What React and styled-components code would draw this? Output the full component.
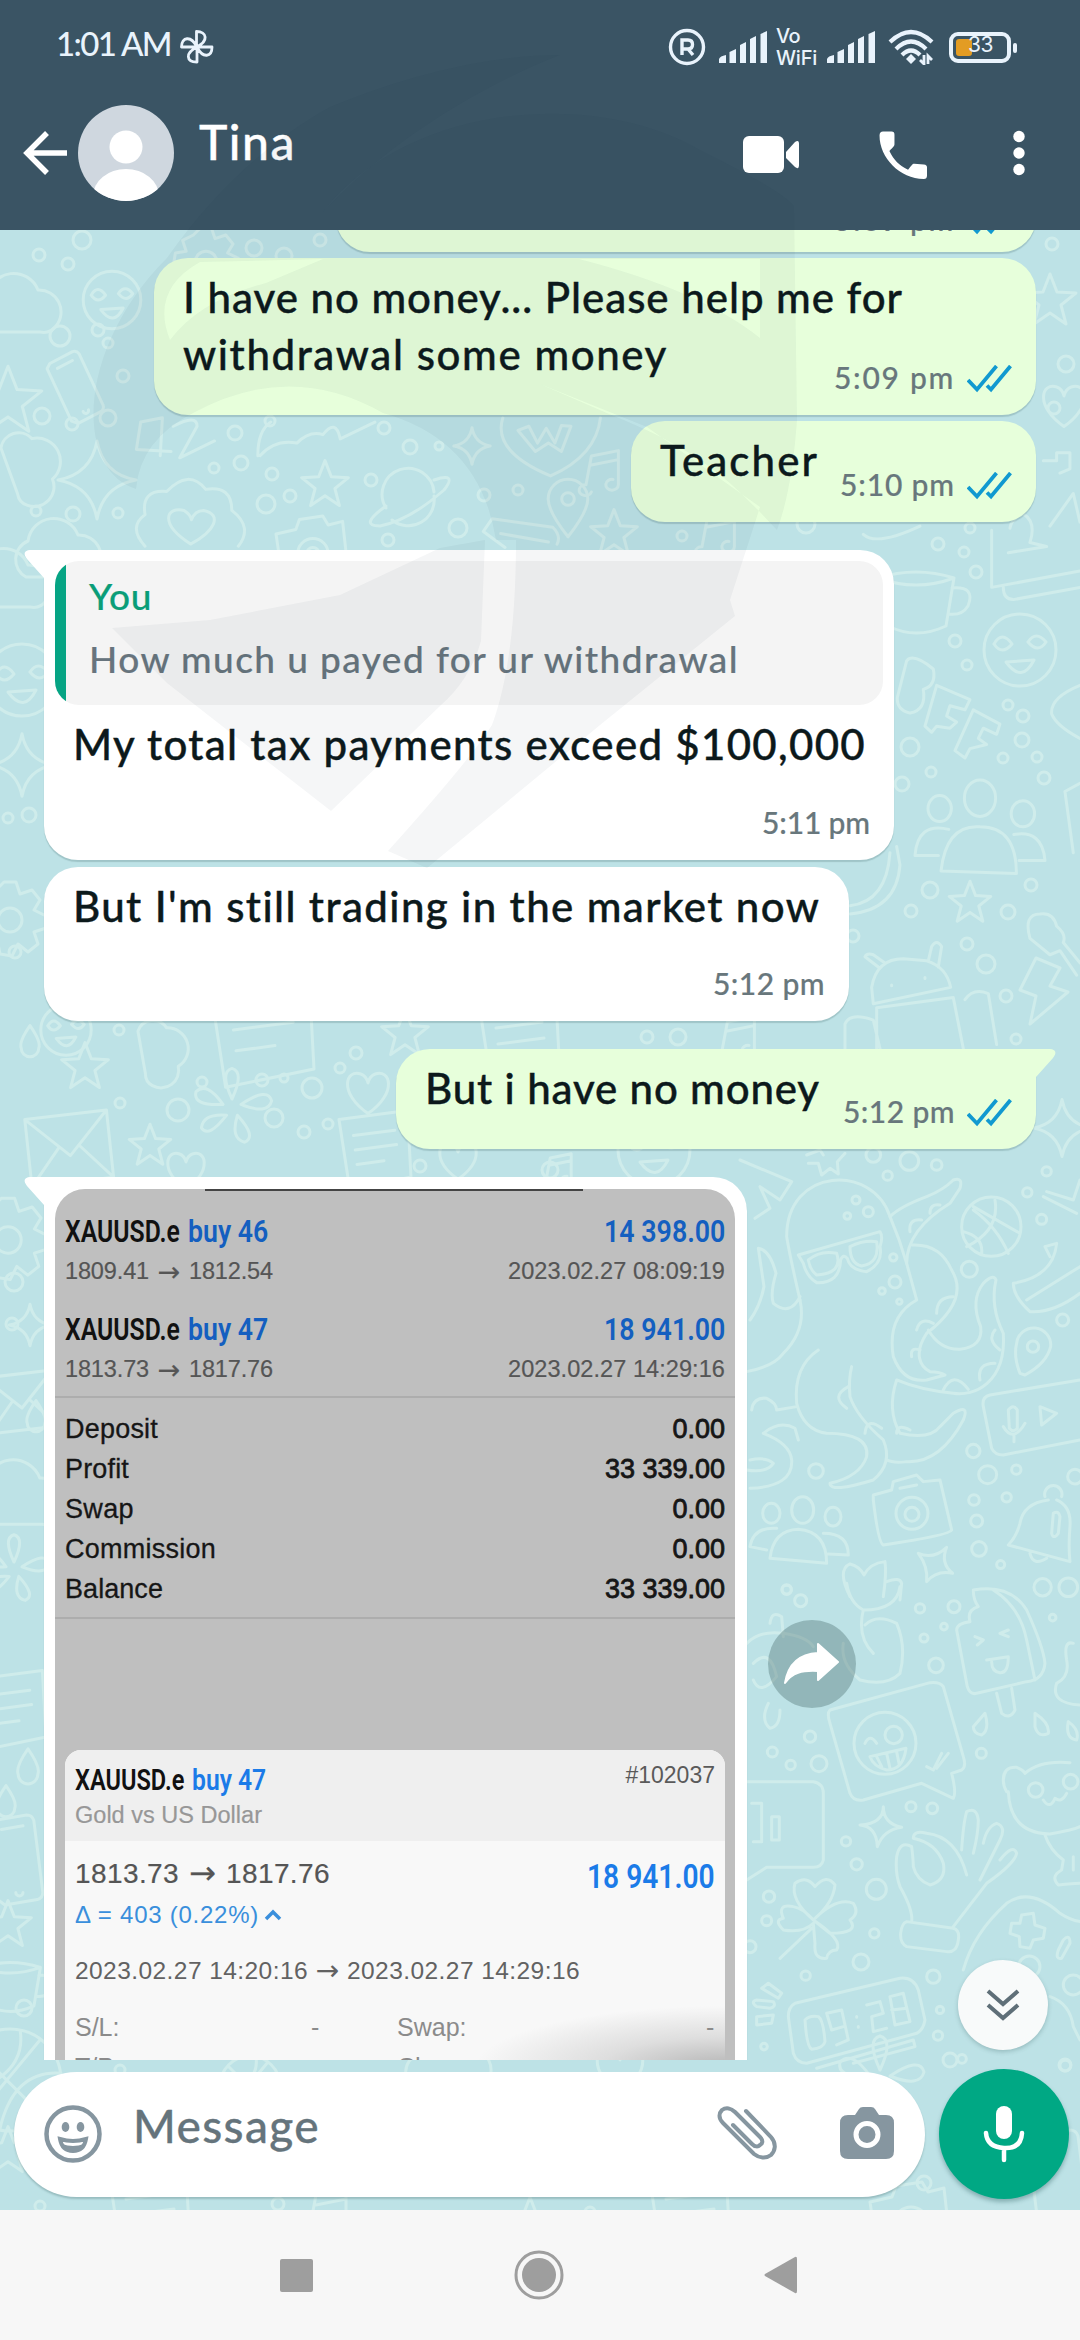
import { useLayoutEffect, useRef, useState } from "react";
import styled, { createGlobalStyle } from "styled-components";

const GlobalStyle = createGlobalStyle`
    * {
        box-sizing: border-box;
    }

    body {
        margin: 0;
        background: #f7f7f7;
    }
`;

const casual = `"Lato", "Open Sans", sans-serif`;
const plain = `"Liberation Sans", Arial, sans-serif`;
const condensed = `"Roboto", "Liberation Sans", sans-serif`;

const Phone = styled.div`
    position: relative;
    width: 1080px;
    height: 2340px;
    display: flex;
    flex-direction: column;
    overflow: hidden;
    font-family: ${casual};
    font-weight: 500;
`;

/* ---------- text fitted to a column ---------- */

const FitSpan = styled.span`
    display: block;
    width: max-content;
    white-space: pre;
    transform-origin: 0 50%;
`;

const Fit = ({ width, children }) => {
    const ref = useRef(null);
    const [spacing, setSpacing] = useState(0);

    useLayoutEffect(() => {
        const natural = ref.current.getBoundingClientRect().width;
        setSpacing((width - natural) / children.length);
    }, [width, children]);

    return (
        <FitSpan ref={ref} style={{ letterSpacing: `${spacing}px` }}>
            {children}
        </FitSpan>
    );
};

// narrows the glyphs themselves instead of the gaps
const Condense = ({ width, children }) => {
    const ref = useRef(null);
    const [scale, setScale] = useState(1);

    useLayoutEffect(() => {
        setScale(width / ref.current.offsetWidth);
    }, [width, children]);

    return (
        <div style={{ width }}>
            <FitSpan ref={ref} style={{ transform: `scaleX(${scale})` }}>
                {children}
            </FitSpan>
        </div>
    );
};

/* ---------- header ---------- */

const Header = styled.header`
    height: 230px;
    flex: none;
    background: #3a5464;
    color: #fff;
`;

const StatusBar = styled.div`
    height: 94px;
    padding: 0 69px 0 56px;
    display: flex;
    align-items: center;
    color: #e9f3fc;
    font-size: 33px;
    line-height: 40px;

    svg {
        flex: none;
    }
`;

const Clock = styled.div`
    margin: -9px 9px 0 0;
`;

const StatusIcons = styled.div`
    display: flex;
    align-items: center;
    margin-left: auto;
`;

const VoWifi = styled.div`
    width: 42px;
    margin: 0 9px;
    font: 500 20px/22px "Inter", sans-serif;
    letter-spacing: -0.5px;
`;

const Battery = styled.div`
    width: 62px;
    height: 31px;
    margin-left: 15px;
    border: 4px solid #e9f3fc;
    border-radius: 9px;
    display: flex;
    align-items: center;
    position: relative;
    padding-left: 3px;

    &::after {
        content: "";
        position: absolute;
        right: -10px;
        top: 7px;
        width: 4px;
        height: 10px;
        border-radius: 2px;
        background: #e9f3fc;
    }
`;

const Charge = styled.div`
    width: 16px;
    height: 17px;
    border-radius: 3px;
    background: #e39c23;
`;

const Percent = styled.div`
    margin: -4px 0 0 -4px;
    font: 400 21px/20px "Inter", sans-serif;
    letter-spacing: -0.5px;
`;

const TitleBar = styled.div`
    height: 136px;
    padding-left: 22px;
    display: flex;
    align-items: flex-start;

    svg {
        display: block;
        flex: none;
    }
`;

const Avatar = styled.div`
    margin: 11px 25px 0 10px;
`;

const ContactName = styled.div`
    font-size: 48px;
    line-height: 60px;
    margin-top: 18px;
    flex: 1;
    -webkit-text-stroke: 0.4px currentColor;
`;

const Action = styled.div`
    margin: ${(p) => p.$top}px ${(p) => p.$right}px 0 0;
`;

/* ---------- chat ---------- */

const Body = styled.main`
    position: relative;
    height: 1980px;
    flex: none;
    background: #bde2e6;
`;

const Wallpaper = styled.svg`
    position: absolute;
    inset: 0;
    fill: none;
    stroke: #cfeceb;
    stroke-width: 3;
    stroke-linecap: round;
    stroke-linejoin: round;

    * {
        vector-effect: non-scaling-stroke;
    }
`;

const Messages = styled.div`
    position: relative;
    height: 1830px;
    overflow: hidden;
    padding: 0 44px;
    display: flex;
    flex-direction: column;
    align-items: flex-start;
`;

const Bubble = styled.div`
    position: relative;
    isolation: isolate;
    flex: none;
    display: grid;
    width: ${(p) => p.$w}px;
    height: ${(p) => p.$h}px;
    margin-top: ${(p) => p.$gap ?? 6}px;
    align-self: ${(p) => (p.$mine ? "flex-end" : "flex-start")};
    background: ${(p) => (p.$mine ? "#e7ffdb" : "#fff")};
    border-radius: 34px;
    border-top-left-radius: ${(p) => (p.$tail && !p.$mine ? 0 : 34)}px;
    border-top-right-radius: ${(p) => (p.$tail && p.$mine ? 0 : 34)}px;
    box-shadow: 0 2px 1px rgba(40, 80, 80, 0.2);

    &::before {
        content: ${(p) => (p.$tail ? '""' : "none")};
        position: absolute;
        z-index: -1;
        top: 0;
        ${(p) => (p.$mine ? "right: -20px; transform: scaleX(-1);" : "left: -20px;")}
        width: 40px;
        height: 32px;
        background: inherit;
        clip-path: path("M6 0H40V32H20V28L3 9Q-3 1 6 0Z");
    }
`;

const Copy = styled.div`
    grid-area: 1 / 1;
    padding: ${(p) => p.$top ?? 11}px 0 0 ${(p) => p.$left ?? 29}px;
    font-size: 42px;
    line-height: 57px;
    color: #0c191b;
    -webkit-text-stroke: 0.4px currentColor;
`;

const Meta = styled.div`
    grid-area: 1 / 1;
    align-self: end;
    justify-self: end;
    display: flex;
    align-items: center;
    gap: 12px;
    margin: 0 24px 18px 0;
    font-size: 30px;
    line-height: 40px;
    color: #68777c;
    -webkit-text-stroke: 0.2px currentColor;

    svg {
        margin-top: 3px;
    }
`;

const LastBubble = styled(Bubble)`
    margin-top: -78px;

    ${Meta} {
        margin-bottom: 13px;
    }
`;

const Quote = styled.div`
    grid-area: 1 / 1;
    width: 828px;
    height: 144px;
    margin: 11px;
    border-radius: 24px;
    overflow: hidden;
    display: flex;
    background: #f4f4f4;
    font-size: 37px;
    line-height: 56px;
    color: #67747d;
    -webkit-text-stroke: 0.2px currentColor;
`;

const QuoteBar = styled.div`
    width: 11px;
    margin-right: 23px;
    background: #06a484;
`;

const QuoteBody = styled.div`
    padding-top: 7px;
    display: flex;
    flex-direction: column;
    gap: 7px;
`;

const QuoteAuthor = styled.div`
    color: #0a9d78;
`;

const PhotoRow = styled.div`
    display: flex;
    align-items: flex-start;
    margin-top: 28px;
    flex: none;
`;

const Forward = styled.div`
    width: 88px;
    height: 88px;
    margin: 443px 0 0 21px;
    border-radius: 50%;
    background: rgba(70, 105, 105, 0.36);
    display: flex;
    align-items: center;
    justify-content: center;
`;

/* ---------- trading screenshot ---------- */

const Photo = styled.div`
    grid-area: 1 / 1;
    position: relative;
    width: 680px;
    height: 900px;
    margin: 12px 0 0 11px;
    padding: 25px 10px 0;
    border-radius: 30px 30px 0 0;
    overflow: hidden;
    background: #bfbfbf;
    font-family: ${plain};
    font-weight: 400;
    color: #161616;
`;

const SheetEdge = styled.div`
    position: absolute;
    top: 0;
    left: 150px;
    width: 378px;
    height: 2px;
    background: #444;
`;

const Row = styled.div`
    display: flex;
    justify-content: space-between;
    align-items: center;
    height: ${(p) => p.$h}px;
`;

const Deal = styled.div`
    height: 98px;
`;

const Symbol = styled.div`
    display: flex;
    gap: 8px;
    font: 600 ${(p) => p.$size ?? 31}px / 36px ${condensed};
    color: #111;
`;

const Blue = styled.div`
    font: 600 ${(p) => p.$size ?? 31}px / 36px ${condensed};
    color: ${(p) => (p.$bright ? "#1b7be8" : "#145fc0")};
`;

const Profit = styled(Blue)`
    padding-top: 5px;
`;

const Prices = styled.div`
    font-size: ${(p) => p.$size ?? 23.5}px;
    color: ${(p) => p.$color ?? "#555"};
    -webkit-text-stroke: 0.2px currentColor;
`;

const ChangeLine = styled.div`
    display: flex;
    align-items: center;
    justify-content: space-between;
    width: ${(p) => p.$w}px;
`;

const Arrow = styled.span`
    font-family: "DejaVu Sans", sans-serif;
    font-size: 1.15em;
    line-height: 0.8;
    margin: 0 -2px;
`;

const Rule = styled.div`
    height: 2px;
    margin: ${(p) => p.$top}px -10px 0;
    background: #adadad;
`;

const Totals = styled.div`
    padding-top: 11px;
    font-size: 27px;
    -webkit-text-stroke: 0.3px currentColor;
`;

const Amount = styled.div`
    -webkit-text-stroke: 0.8px currentColor;
`;

const Card = styled.div`
    margin: 131px 0 0;
    height: 370px;
    border-radius: 16px 16px 0 0;
    overflow: hidden;
    background: radial-gradient(ellipse 250px 62px at 100% 318px, #b4b4b4 0, #dedede 50%, #f8f8f8 100%);
`;

const CardHead = styled.div`
    height: 91px;
    padding: 16px 10px 0;
    background: #efefef;
`;

const Ticket = styled.div`
    margin-top: -9px;
    font-size: 23px;
    color: #5a5a5a;
`;

const CardBody = styled.div`
    padding: 15px 10px 0;
    color: #5c5c5c;
`;

const Delta = styled.div`
    display: flex;
    align-items: center;
    gap: 5px;
    height: 46px;
    font-size: 24px;
    color: #3a8fdc;
`;

const Period = styled.div`
    margin-top: 18px;
    font-size: 24.5px;
    line-height: 30px;
    color: #626262;
`;

const Details = styled.div`
    display: grid;
    grid-template-columns: 236px 86px 309px 1fr;
    row-gap: 10px;
    margin-top: 26px;
    font-size: 25px;
    line-height: 30px;
    color: #8b8b8b;
`;

/* ---------- composer and navigation ---------- */

const Composer = styled.div`
    position: relative;
    display: flex;
    align-items: center;
    gap: 14px;
    padding: 9px 11px 0 14px;
`;

const Field = styled.div`
    width: 911px;
    height: 125px;
    border-radius: 63px;
    background: #fff;
    box-shadow: 0 2px 2px rgba(40, 80, 80, 0.25);
    display: flex;
    align-items: center;
    padding: 0 31px 0 30px;

    svg {
        flex: none;
    }
`;

const Placeholder = styled.div`
    flex: 1;
    margin: -17px 0 0 31px;
    font-size: 46px;
    line-height: 60px;
    color: #65747c;
    -webkit-text-stroke: 0.3px currentColor;
`;

const FieldIcons = styled.div`
    display: flex;
    align-items: center;
    gap: 63px;
    margin-top: -3px;
`;

const Mic = styled.div`
    width: 130px;
    height: 130px;
    border-radius: 50%;
    background: #00a884;
    box-shadow: 0 3px 4px rgba(30, 80, 80, 0.35);
    display: flex;
    align-items: center;
    justify-content: center;
`;

const ScrollDown = styled.div`
    position: absolute;
    left: 958px;
    top: 1730px;
    width: 90px;
    height: 90px;
    border-radius: 50%;
    background: #f8fafa;
    box-shadow: 0 2px 4px rgba(40, 80, 80, 0.25);
    display: flex;
    align-items: center;
    justify-content: center;
`;

const NavBar = styled.nav`
    height: 130px;
    background: #f7f7f7;
    display: flex;
    align-items: center;
    padding: 0 283px 0 280px;
    justify-content: space-between;
`;

const Watermark = styled.svg`
    position: absolute;
    left: 0;
    top: 0;
    pointer-events: none;
    fill: rgba(30, 50, 60, 0.042);
`;

/* ---------- wallpaper ---------- */

const motifs = {
    star: "M0-26L7-8 26-7 11 5 16 24 0 13-16 24-11 5-26-7-7-8Z",
    spark: "M0-26Q4-4 26 0Q4 4 0 26Q-4 4-26 0Q-4-4 0-26Z",
    heart: "M0 24C-34 0-24-26-8-20Q-2-18 0-10Q2-18 8-20C24-26 34 0 0 24Z",
    pin: "M0 32Q-22 4-22-10A22 22 0 1 1 22-10Q22 4 0 32ZM-7-10a7 7 0 1 0 14 0a7 7 0 1 0-14 0",
    drop: "M0-18Q14 2 11 10A11 11 0 0 1-11 10Q-14 2 0-18Z",
    cloud: "M-34 22A20 20 0 0 1-32-14A26 26 0 0 1 18-20A22 22 0 0 1 36 16Q30 24 20 22Z",
    note: "M-14 20a7 6 0 1 1-6-8L-14-20 16-26V12M16 12a7 6 0 1 1-6-6M-14-10L16-16",
    planet: "M-24 8A26 26 0 1 1 24-8M24-4A26 26 0 0 1-18 20M-24 6Q-52 26-30 26Q0 20 34-10Q48-28 24-20",
    camera: "M-40-20L-18-25-14-36 12-40 18-30 34-34 40 20-32 34ZM-16 2a17 17 0 1 0 34 0a17 17 0 1 0-34 0M-6 2a7 7 0 1 0 14 0a7 7 0 1 0-14 0",
    face: "M-36 0a36 36 0 1 0 72 0a36 36 0 1 0-72 0M-14 12Q2 34 14 10ZM-26-6Q-18-20-8-6-18 6-26-6M8-8Q16-20 26-8 18 4 8-8",
    people: "M-12-26a12 14 0 1 0 24 0a12 14 0 1 0-24 0M-30 30Q-26-6 0-4Q28-4 28 32ZM-40-18a9 10 0 1 0 18 0a9 10 0 1 0-18 0M24-14a9 10 0 1 0 18 0a9 10 0 1 0-18 0M-32 18H-50Q-48-8-24-2M30 22H50Q48-2 26 2",
    letter: "M-36-22L32-30 38 26-30 34ZM-36-22L2 8 32-30M-30 34L-8 2M38 26L10 0",
    page: "M-40-34L36-44 40 30-28 44ZM-24-16L22-22M-22 0L24-6M-20 16L10 12",
    gear: "M-6-38H6L10-26 22-30 30-20 24-10 36-4V8L24 12 28 24 18 32 8 24 2 36-10 34-12 24-26 28-32 16-24 8-36 2-34-10-22-12-26-24-14-30ZM-12 0a12 12 0 1 0 24 0a12 12 0 1 0-24 0",
    bolt: "M-8-32L16-22 6-4 24 2-14 34-8 6-24 0Z",
    mug: "M-38-22Q0-34 38-22L30 26Q0 40-28 26ZM36-12Q60-14 52 6 46 16 32 14M-38-22Q0-8 38-22",
    flower: "M0-10Q-14-40 0-44 14-40 0-10ZM10-4Q40-24 44-8 40 8 10-4ZM6 8Q28 32 14 38-2 34 6 8ZM-6 8Q-26 34-34 22-32 6-6 8ZM-10-4Q-44-2-40-18-28-30-10-4Z",
    ball: "M-30 0a30 30 0 1 0 60 0a30 30 0 1 0-60 0M-22-20L20 22M-28 8Q10-2 6-29M-6 29Q2-6 30-4M18-24L-20 22",
    phone: "M-22-44L14-50Q20-50 22-44L32 36Q32 42 26 44L-10 50-18 44-28-38ZM-14-34L10-38M2 36a4 4 0 1 0 8 0",
};

const placed = [
    ["cloud", 20, 310, 1], ["gear", 206, 262, 0.9], ["face", 112, 300, 0.8], ["phone", 74, 388, 0.7, -18], ["star", 8, 400, 1.3],
    ["spark", 97, 480, 1.5], ["cloud", 30, 470, 0.9, 70], ["star", 325, 484, 0.9], ["planet", 410, 500, 1], ["spark", 472, 446, 0.7],
    ["pin", 568, 508, 0.9], ["note", 604, 474, 0.9], ["star", 614, 533, 0.9], ["camera", 312, 552, 0.9], ["cloud", 60, 555, 1],
    ["note", 720, 536, 0.9], ["star", 1050, 300, 1], ["heart", 1064, 405, 0.9], ["mug", 916, 600, 1],
    ["face", 1020, 650, 1], ["people", 980, 832, 1.3], ["star", 970, 902, 0.8], ["bolt", 1044, 990, 1], ["spark", 22, 765, 1.2],
    ["face", 22, 680, 1], ["cloud", 10, 585, 1], ["gear", 10, 920, 1], ["face", 66, 1030, 0.7], ["star", 85, 1066, 0.9],
    ["cloud", 160, 1055, 0.8, 80], ["page", 262, 1030, 1.3], ["star", 405, 1033, 0.9], ["page", 520, 1044, 1], ["note", 740, 1040, 0.9],
    ["heart", 368, 1092, 0.9], ["letter", 68, 1146, 1.2], ["flower", 232, 1108, 0.9], ["star", 150, 1145, 0.8], ["page", 375, 1150, 0.9],
    ["spark", 1062, 1128, 1.1], ["heart", 186, 1170, 0.8], ["gear", 8, 1240, 1.1], ["letter", 20, 1400, 1], ["drop", 36, 1415, 0.8],
    ["cloud", 20, 1500, 1.1], ["flower", 14, 1570, 0.8], ["page", 10, 1710, 0.9], ["drop", 28, 1765, 0.9], ["drop", 6, 1800, 0.8],
    ["phone", 14, 1860, 0.9], ["star", 8, 1924, 0.9], ["ball", 10, 2080, 1.7], ["mug", 10, 1985, 0.8], ["spark", 30, 1325, 0.8],
    ["page", 150, 2215, 1], ["note", 330, 2215, 1], ["star", 530, 2218, 0.8], ["page", 690, 2215, 1], ["camera", 910, 2222, 1],
    ["cloud", 450, 2068, 1], ["heart", 620, 2070, 1], ["ball", 250, 2086, 1], ["flower", 880, 2080, 1], ["phone", 1056, 2180, 1],
    ["note", 560, 1172, 0.7], ["heart", 458, 1160, 0.8], ["face", 654, 1150, 1], ["star", 8, 2150, 0.9], ["drop", 30, 1040, 0.8],
];

const dots = [
    [39, 255, 6], [68, 264, 6], [82, 240, 9], [254, 248, 8], [284, 256, 8], [320, 240, 6], [98, 330, 6], [60, 336, 10], [108, 343, 5],
    [123, 376, 6], [108, 418, 8], [42, 416, 8], [72, 424, 6], [235, 433, 7], [384, 428, 6], [410, 447, 7], [439, 446, 4], [270, 421, 5],
    [241, 463, 7], [272, 474, 6], [214, 468, 5], [290, 496, 6], [266, 504, 9], [371, 480, 6], [484, 495, 6], [518, 490, 5], [458, 528, 9],
    [388, 540, 6], [118, 513, 5], [36, 511, 5], [73, 514, 7], [682, 536, 5], [806, 524, 9], [938, 544, 6], [964, 552, 5], [976, 572, 6],
    [970, 528, 5], [1052, 244, 6], [1066, 364, 8], [1054, 408, 6], [955, 641, 6], [967, 665, 5], [1008, 705, 5], [1023, 716, 6],
    [1022, 740, 7], [1003, 758, 5], [1037, 757, 5], [1044, 778, 6], [910, 747, 9], [902, 784, 7], [931, 772, 5], [930, 890, 8],
    [911, 911, 6], [1008, 912, 7], [1031, 885, 6], [853, 936, 6], [967, 944, 6], [986, 964, 9], [1006, 996, 6], [1016, 1039, 5],
    [647, 1037, 6], [678, 1037, 8], [29, 815, 7], [8, 818, 5], [15, 952, 6], [119, 1030, 5], [120, 1103, 5], [178, 1110, 11],
    [262, 1080, 6], [284, 1078, 4], [312, 1088, 10], [202, 1082, 5], [274, 1118, 9], [304, 1132, 6], [328, 1124, 5], [356, 1053, 6],
    [340, 1068, 5], [420, 1166, 6], [550, 1170, 8], [14, 1282, 9], [12, 1324, 6], [24, 2008, 8], [120, 2070, 5], [590, 2212, 5],
    [278, 2204, 6], [924, 2183, 7], [1065, 2065, 6], [40, 2206, 5], [950, 2060, 7],
];

// octopus, basketball, voice note, bell
const octopusArt = [
    "M180 600Q150 470 140 410C140 200 400 190 450 350Q480 420 500 490L530 600Q440 650 460 770Q490 850 560 840L615 825Q600 815 570 815C540 800 520 760 560 700Q690 600 635 510 600 430 515 435",
    "M450 350Q480 320 560 290Q610 270 640 240Q670 230 660 265L630 310Q500 390 500 490",
    "M565 690Q600 750 660 748Q730 740 722 680Q690 600 730 550 760 520 768 540 750 620 790 700C800 850 700 890 640 880Q540 870 470 840Q440 930 480 1000Q570 1020 600 980L640 940Q690 910 670 960 600 1090 500 1085 460 1090 440 1080",
    "M235 750Q160 800 170 910 190 990 260 1000 390 1000 380 1070 360 1130 270 1150 270 1180 400 1140 460 1090 430 1020 350 950 330 890 325 840 335 800",
    "M180 600Q200 690 130 760 100 800 20 815M180 590Q150 650 100 610 90 580 108 520 90 450 55 445 60 480 72 560 60 620 30 660",
    "M175 465L420 395Q430 410 420 440 430 490 380 515 330 510 322 475 310 460 302 480 300 550 230 548 200 530 190 490ZM205 480Q240 450 290 460 310 520 230 525 210 510 205 480M330 440Q370 420 410 425 420 490 365 498 330 490 330 440",
    "M200 165L240 150 250 165M205 190L235 190 245 225 270 205 295 222 292 185 315 160",
    "M665 380a89 89 0 1 0 178 0a89 89 0 1 0-178 0M700 320L840 400M680 440Q780 390 765 300M700 330Q770 380 805 460M670 395Q730 410 725 460",
    "M915 440L950 430Q940 530 820 550 820 590 870 635 940 640 1020 580M915 440L930 470M860 600L1020 500",
    "M840 820Q820 770 830 730A50 50 0 0 1 932 740Q920 790 855 825ZM862 740a17 17 0 1 0 34 0a17 17 0 1 0-34 0",
    "M1020 840L750 885Q725 890 730 920L755 1045Q765 1065 790 1065L1020 1020M805 930Q820 910 832 930V985Q820 1000 808 985ZM790 980Q820 1030 855 970M822 1005V1025M900 920L950 940 905 975Z",
    "M400 1185L455 1170 460 1145 530 1125 550 1145 600 1140 635 1290Q630 1305 430 1335 415 1330 400 1200ZM468 1240a48 48 0 1 0 96 0a48 48 0 1 0-96 0M495 1243a21 21 0 1 0 42 0a21 21 0 1 0-42 0M480 1165L530 1155",
    "M925 1200Q850 1210 840 1270 830 1310 805 1335L990 1385Q985 1340 990 1280 995 1220 950 1200M915 1190a26 26 0 1 1 50 0M870 1360Q880 1400 920 1375M940 1240Q955 1230 960 1250L955 1300Q940 1320 935 1300Z",
    "M30 1340Q40 1280 110 1285M30 1340L80 1350M90 1375Q100 1290 175 1288 260 1295 260 1390ZM155 1230a33 40 0 1 0 66 0a33 40 0 1 0-66 0M68 1240a26 30 0 1 0 52 0a26 30 0 1 0-52 0M255 1250a24 28 0 1 0 48 0a24 28 0 1 0-48 0M250 1300Q325 1300 325 1365L265 1362",
    "M535 1360Q580 1380 620 1342 600 1390 638 1420 590 1410 560 1445 565 1400 535 1360ZM330 1490Q290 1410 330 1392 360 1400 372 1425 390 1390 435 1385 440 1420 430 1490M440 1445Q480 1430 485 1450L480 1500",
    "M0 180L155 245 120 300 60 260 90 325 45 355M920 275L1000 300 1020 240M910 290L1010 340",
    "M35 930Q40 890 80 895 110 910 110 930L170 920M70 1000Q120 960 165 985L175 1020M20 1110Q80 1120 100 1090 80 1070 30 1080M30 1165Q160 1160 155 1080 150 1030 70 1000",
    "M510 395Q505 355 545 360M570 340Q570 310 600 315M590 640Q590 590 640 590M530 690Q540 650 580 670M515 770Q510 740 540 750M720 840Q710 790 765 790M610 870Q640 810 685 868M780 750Q740 720 765 690M320 925Q270 890 325 860M375 1000Q380 950 425 985M470 1000Q470 970 510 990",
];

const octopusDots = [
    [400, 165, 22], [508, 183, 28], [590, 195, 16], [443, 227, 14], [385, 335, 15], [348, 300, 12], [322, 348, 10], [460, 472, 11],
    [465, 546, 18], [426, 573, 10], [478, 605, 8], [688, 508, 24], [862, 277, 14], [905, 358, 15], [920, 214, 14], [968, 660, 18],
    [700, 1053, 20], [743, 1124, 27], [829, 1109, 14], [702, 1200, 16], [800, 1192, 14], [710, 1263, 18], [717, 1347, 22],
    [782, 1394, 12], [908, 1462, 26], [985, 1462, 28], [1005, 1130, 22], [228, 1113, 22], [140, 1470, 14],
];

// popsicle, winking bubble, clover, hand, gamepad and clock
const stickerArt = [
    "M700 30Q810 10 860 90 910 200 915 250 910 300 860 305L710 340Q690 345 682 320L650 150Q650 130 690 125 680 90 715 80 700 60 700 30ZM760 30Q840 80 860 180L885 300M770 340L785 400Q810 420 825 390L815 325M740 240L805 230Q805 280 780 278 755 275 755 245M705 170L730 180 712 195M805 150L780 160 805 170",
    "M270 390Q260 400 270 430L330 640Q340 665 370 660L545 610 640 655Q650 640 635 580L665 570Q680 560 670 530L610 320Q600 305 570 308ZM342 490a93 93 0 1 0 186 0a93 93 0 1 0-186 0M375 490Q390 460 410 490M435 465a26 26 0 1 0 52 0a26 26 0 1 0-52 0M390 530L498 505Q490 570 440 570 400 560 390 530M410 530L425 560M440 520L450 565M470 515L478 555M560 560L580 570 605 520M590 565L625 520",
    "M20 605H220Q250 610 250 640V840Q245 862 220 862H80L20 900M35 670H65V785H40M95 710V780H118V710Z",
    "M220 1020Q150 960 165 910 200 885 225 920 260 880 285 915 280 970 220 1020 290 950 340 970 360 1000 330 1020 360 1060 270 1060L220 1020Q310 1080 290 1110 265 1110 260 1135 220 1140 225 1090L220 1030Q190 1060 130 1050 100 1020 130 1015 110 970 160 980 190 985 220 1020M215 1045L120 1135",
    "M515 1025Q520 990 480 920 465 880 470 830 480 780 515 800 520 840 520 860 530 900 570 915 620 900 610 850 590 790 520 775 520 750 560 760 650 770 680 885M665 810Q670 730 680 695 710 680 715 720 715 760 700 820M730 790Q740 740 770 730 800 740 780 780L720 900M780 840Q820 790 830 820 825 850 740 910L640 1040M500 1025L640 1045Q660 1050 655 1080 650 1120 620 1115L500 1100Q480 1090 482 1060 485 1030 500 1025Z",
    "M800 570Q780 600 800 635M790 600Q790 560 830 562 850 570 855 580 900 540 990 548M805 635Q810 760 930 762 1000 750 1020 740M865 630a22 22 0 1 0 44 0a22 22 0 1 0-44 0M970 605a22 22 0 1 0 44 0a22 22 0 1 0-44 0M910 660Q930 690 945 655 965 670 980 640M915 765Q930 810 970 840L965 870Q930 890 955 915 1000 910 1020 910M1000 830V870",
    "M670 1170Q700 1060 800 970 870 920 960 1000 990 1020 1020 1025M845 1005L880 1000 885 1035 915 1045 910 1075 880 1080 870 1105 840 1100 838 1070 810 1060 815 1030 840 1030ZM970 1080Q990 1060 990 1090L965 1135Q945 1140 955 1110ZM930 1250Q990 1270 1000 1340L1020 1380",
    "M165 1270L480 1195Q520 1190 535 1230L555 1320Q550 1350 530 1360L200 1450Q170 1450 160 1420L145 1310Q145 1280 165 1270ZM195 1320Q210 1305 235 1310 250 1320 255 1385 250 1405 215 1408 200 1400 195 1320ZM310 1340L275 1350 260 1300 305 1290 325 1380 290 1395M380 1275L420 1265 430 1300 395 1310 400 1355 440 1345M450 1250L490 1240 510 1325 465 1335ZM455 1290L500 1285M350 1310V1312M355 1340V1342M230 1465L520 1380 525 1400 340 1450",
    "M50 1280Q30 1265 50 1260L100 1265Q110 1280 90 1285ZM50 1310L100 1305 95 1330 50 1335ZM65 1225L85 1210 125 1240 115 1255Z",
    "M20 190Q60 150 130 160 200 170 220 200M40 250Q90 200 110 290 60 350 40 300M90 130Q95 90 125 110L130 170M85 370Q60 420 90 445 120 440 120 390M320 10Q330 70 370 90 470 90 480 20M370 90Q350 170 400 220M375 135Q410 100 470 130 500 200 480 280 440 320 360 300 300 250 310 190",
    "M1000 190Q970 180 980 240 990 290 950 310 930 370 1020 375M885 400Q930 430 925 460 895 475 885 440ZM985 425Q1020 450 1010 480 975 475 985 425M735 400Q750 450 725 465 700 460 700 440ZM430 680Q430 730 485 742 430 750 412 800 410 740 360 735 430 730 430 680Z",
];

const stickerDots = [
    [140, 28, 14], [182, 62, 18], [540, 85, 14], [642, 80, 18], [612, 140, 10], [552, 174, 12], [588, 256, 22], [938, 113, 10],
    [210, 470, 17], [97, 516, 15], [152, 555, 14], [237, 551, 24], [724, 520, 15], [513, 680, 15], [577, 685, 16], [318, 784, 14],
    [350, 853, 17], [409, 928, 30], [87, 950, 17], [80, 1022, 15], [403, 1060, 14], [363, 1146, 24], [197, 1187, 14], [580, 1190, 20],
    [600, 1290, 11], [594, 1367, 14], [72, 1400, 10], [666, 1437, 13], [976, 1457, 16], [1000, 1215, 30], [30, 1100, 18], [868, 1160, 32],
];

const shieldArt = [
    "M140 480L190 470 185 560M140 480L130 545 210 550M215 490Q270 460 270 490L230 565 310 525M410 560Q410 500 440 480M415 560Q450 520 500 530 530 500 560 510 590 470 600 520 640 500 680 480",
    "M150 775Q110 730 150 700 140 640 200 645 250 590 290 640 350 630 350 690 400 730 365 775M255 770C180 720 200 680 240 690Q255 700 257 712 265 690 285 690C330 700 310 740 255 770Z",
    "M975 470Q950 550 1085 608 1190 560 1200 470M1010 500L1035 490 1055 530 1075 495 1095 530 1110 488 1132 490 1110 550 1080 530 1050 550Z",
    "M930 740L950 710 1090 730Q1110 750 1100 770M930 740L980 778M970 745L1080 765",
];

const friendsArt = [
    "M920 590Q940 570 1000 610 1010 650 970 660 980 710 930 718 890 710 892 680ZM1010 650L1110 685 1095 710 1050 700 1040 725 1070 740 1050 755 1010 750 995 765 975 750ZM1120 710L1200 745 1190 770 1150 755 1135 780 1160 795 1110 805 1095 828 1065 810Z",
    "M820 1430L815 1390Q830 1320 910 1320L980 1325Q1040 1340 1052 1390ZM835 1340L795 1315Q800 1305 820 1310L855 1330M985 1325L995 1290Q1010 1270 1025 1290L1015 1340M830 1440L1060 1415 1090 1540M830 1440V1540M735 1540V1480Q750 1450 820 1470L840 1540M1095 1420Q1120 1390 1165 1405L1190 1530M875 1384V1386M975 1366V1368",
    "M1225 325L1340 310 1290 300Q1310 250 1270 230 1235 240 1230 265M1350 260L1420 180 1440 250M1175 270V410L1440 370M1210 410Q1210 440 1240 440L1440 410M1330 100L1370 100 1370 80H1410V120L1380 130",
    "M1290 1270Q1270 1210 1320 1210 1360 1205 1370 1240 1400 1260 1390 1280L1440 1330M1290 1270L1350 1310 1380 1300 1430 1360M1395 910L1440 890M1395 910L1420 1060M1440 650Q1350 680 1355 720 1370 750 1440 780M750 1210Q890 1200 900 1090L890 1045M750 1190Q860 1180 870 1060M790 280Q830 310 960 260",
];

const Art = ({ at, lines, circles = [] }) => (
    <g transform={at}>
        {lines.map((d) => (
            <path key={d} d={d} />
        ))}
        {circles.map(([x, y, r]) => (
            <circle key={`${x}-${y}`} cx={x} cy={y} r={r} />
        ))}
    </g>
);

const Doodles = () => (
    <Wallpaper width="1080" height="1980" viewBox="0 230 1080 1980">
        {placed.map(([kind, x, y, scale, turn = 0]) => (
            <path key={`${x}-${y}`} d={motifs[kind]} transform={`translate(${x} ${y}) rotate(${turn}) scale(${scale})`} />
        ))}
        {dots.map(([x, y, r]) => (
            <circle key={`${x}-${y}`} cx={x} cy={y} r={r} />
        ))}
        <Art at="translate(740 1100) scale(.3333)" lines={octopusArt} circles={octopusDots} />
        <Art at="translate(740 1580) scale(.3333)" lines={stickerArt} circles={stickerDots} />
        <Art at="translate(80 220) scale(.4337 .4209)" lines={shieldArt} />
        <Art at="translate(600 420) scale(.3333 .4082)" lines={friendsArt} />
    </Wallpaper>
);

/* ---------- icons ---------- */

const Signal = () => (
    <svg width="48" height="32" viewBox="0 0 48 32" fill="currentColor">
        <path d="M0 32V28Q1 25 7 24V32ZM10.500 32V21L17 18V32ZM21 32V14L27 11V32ZM31 32V8L37 5V32ZM41.500 32V3L48 0V32Z" />
    </svg>
);

const Ticks = () => (
    <svg width="45" height="28" viewBox="0 0 45 28" fill="none" stroke="#1199d0" strokeWidth="3.800">
        <path d="M1 15L10 24.500 29.500 1M20 20.500L24 24.500 43.500 1" />
    </svg>
);

const Time = ({ value, width, read }) => (
    <Meta>
        <Fit width={width}>{value}</Fit>
        {read && <Ticks />}
    </Meta>
);

const Change = ({ from, to, width, total }) => (
    <ChangeLine $w={total}>
        <Fit width={width}>{from}</Fit>
        <Arrow>→</Arrow>
        <Fit width={width}>{to}</Fit>
    </ChangeLine>
);

const deals = [
    { lots: "buy 46", profit: "14 398.00", from: "1809.41", to: "1812.54", date: "2023.02.27 08:09:19" },
    { lots: "buy 47", profit: "18 941.00", from: "1813.73", to: "1817.76", date: "2023.02.27 14:29:16" },
];

const totals = [
    ["Deposit", "0.00", 93],
    ["Profit", "33 339.00", 64],
    ["Swap", "0.00", 69],
    ["Commission", "0.00", 151],
    ["Balance", "33 339.00", 98],
];

const TradePhoto = () => (
    <Photo>
        <SheetEdge />
        {deals.map((deal) => (
            <Deal key={deal.lots}>
                <Row $h={36}>
                    <Symbol>
                        <Condense width={115}>XAUUSD.e</Condense>
                        <Blue>
                            <Condense width={80}>{deal.lots}</Condense>
                        </Blue>
                    </Symbol>
                    <Blue>
                        <Condense width={121}>{deal.profit}</Condense>
                    </Blue>
                </Row>
                <Row $h={43}>
                    <Prices>
                        <Change from={deal.from} to={deal.to} width={84} total={208} />
                    </Prices>
                    <Prices>
                        <Fit width={217}>{deal.date}</Fit>
                    </Prices>
                </Row>
            </Deal>
        ))}
        <Rule $top={-14} />
        <Totals>
            {totals.map(([label, amount, width]) => (
                <Row key={label} $h={40}>
                    <Fit width={width}>{label}</Fit>
                    <Amount>{amount}</Amount>
                </Row>
            ))}
        </Totals>
        <Rule $top={8} />
        <Card>
            <CardHead>
                <Row $h={28}>
                    <Symbol $size={29}>
                        <Condense width={109}>XAUUSD.e</Condense>
                        <Blue $size={29} $bright>
                            <Condense width={74}>buy 47</Condense>
                        </Blue>
                    </Symbol>
                    <Ticket>#102037</Ticket>
                </Row>
                <Row $h={43}>
                    <Prices $color="#979797">
                        <Fit width={187}>Gold vs US Dollar</Fit>
                    </Prices>
                </Row>
            </CardHead>
            <CardBody>
                <Row $h={36}>
                    <Prices $size={28}>
                        <Change from="1813.73" to="1817.76" width={104} total={255} />
                    </Prices>
                    <Profit $bright $size={33}>
                        <Condense width={128}>18 941.00</Condense>
                    </Profit>
                </Row>
                <Delta>
                    <Fit width={184}>Δ = 403 (0.22%)</Fit>
                    <svg width="18" height="12" viewBox="0 0 18 12" fill="none" stroke="currentColor" strokeWidth="3.500">
                        <path d="M2 10L9 3 16 10" />
                    </svg>
                </Delta>
                <Period>
                    <Change from="2023.02.27 14:20:16" to="2023.02.27 14:29:16" width={233} total={505} />
                </Period>
                <Details>
                    <span>S/L:</span>
                    <span>-</span>
                    <span>Swap:</span>
                    <span>-</span>
                    <span>T/P:</span>
                    <span>-</span>
                    <span>Charges:</span>
                    <span>-</span>
                </Details>
            </CardBody>
        </Card>
    </Photo>
);

const TopBar = () => (
    <Header>
        <StatusBar>
            <Clock>
                <Fit width={115}>1:01 AM</Fit>
            </Clock>
            <svg width="34" height="34" viewBox="0 0 34 34" fill="none" stroke="currentColor" strokeWidth="2.800" strokeLinejoin="round">
                <path d="M16.500 17V1.500C27 1.500 29 11 16.500 17M17 17H32C32 27 23 29 17 17M17 17V32C6 32 5 23 17 17M17 17H1.500C1.500 7 11 5 17 17" />
            </svg>
            <StatusIcons>
                <svg width="38" height="38" viewBox="0 0 38 38" fill="none" stroke="currentColor" strokeWidth="3.400">
                    <circle cx="19" cy="19" r="16.500" />
                    <path d="M14 27V12H20Q24.500 12 24.500 16.500T20 21H14M20 21L25 27" />
                </svg>
                <svg width="13" height="2" />
                <Signal />
                <VoWifi>
                    <div>Vo</div>
                    <Fit width={41}>WiFi</Fit>
                </VoWifi>
                <Signal />
                <svg width="13" height="2" />
                <svg width="46" height="36" viewBox="0 0 46 36" fill="none" stroke="currentColor" strokeWidth="4.200">
                    <path d="M2 13Q23-7 44 13M8 20Q23 5 38 20M14 26Q23 17 32 26" />
                    <path d="M23 25l5 5-5 5-5-5Z" fill="currentColor" stroke="none" />
                    <path d="M36 26V35L32 31M40 35V27L44 31" strokeWidth="2.800" />
                </svg>
                <Battery>
                    <Charge />
                    <Percent>33</Percent>
                </Battery>
            </StatusIcons>
        </StatusBar>
        <TitleBar>
            <Action $top={36} $right={0}>
                <svg width="46" height="46" viewBox="0 0 46 46" fill="none" stroke="#fff" strokeWidth="5.500">
                    <path d="M25 3L5 23 25 43M5 23H45" />
                </svg>
            </Action>
            <Avatar>
                <svg width="96" height="96" viewBox="0 0 96 96">
                    <clipPath id="avatar">
                        <circle cx="48" cy="48" r="48" />
                    </clipPath>
                    <g clipPath="url(#avatar)">
                        <rect width="96" height="96" fill="#cfd7df" />
                        <circle cx="48" cy="42" r="16.500" fill="#fff" />
                        <ellipse cx="48" cy="91" rx="33" ry="27" fill="#fff" />
                    </g>
                </svg>
            </Avatar>
            <ContactName>
                <Fit width={97}>Tina</Fit>
            </ContactName>
            <Action $top={42} $right={79}>
                <svg width="57" height="38" viewBox="0 0 57 38" fill="#fff">
                    <rect width="41" height="37" rx="6" />
                    <path d="M43 16L52 6Q56 3 56 8V29Q56 34 52 31L43 22Z" />
                </svg>
            </Action>
            <Action $top={37} $right={85}>
                <svg width="48" height="48" viewBox="3 3 18 18" fill="#fff">
                    <path d="M4.500 3.200H7.700C8.500 3.200 8.800 3.600 8.800 4.400V8C8.800 8.600 8.400 9 6.900 10.500C8.600 14 10.500 15.800 13.900 17.500C15.200 16 15.500 15.300 16.200 15.300L19.800 15.600C20.700 15.700 21 16.100 21 16.700V19.700C21 20.600 20.600 21 19.800 21C10.800 21 3.200 13 3.200 4.700C3.200 3.600 3.700 3.200 4.500 3.200Z" />
                </svg>
            </Action>
            <Action $top={36} $right={54}>
                <svg width="14" height="46" viewBox="0 0 14 46" fill="#fff">
                    <circle cx="7" cy="6.500" r="5.700" />
                    <circle cx="7" cy="23" r="5.700" />
                    <circle cx="7" cy="39.500" r="5.700" />
                </svg>
            </Action>
        </TitleBar>
    </Header>
);

const Chat = () => (
    <Messages>
        <LastBubble $mine $w={700} $h={100}>
            <Time value="5:09 pm" width={121} read />
        </LastBubble>
        <Bubble $mine $w={882} $h={157}>
            <Copy>
                <Fit width={720}>I have no money... Please help me for</Fit>
                <Fit width={485}>withdrawal some money</Fit>
            </Copy>
            <Time value="5:09 pm" width={121} read />
        </Bubble>
        <Bubble $mine $w={405} $h={101}>
            <Copy>
                <Fit width={159}>Teacher</Fit>
            </Copy>
            <Time value="5:10 pm" width={115} read />
        </Bubble>
        <Bubble $tail $w={850} $h={310} $gap={28}>
            <Quote>
                <QuoteBar />
                <QuoteBody>
                    <QuoteAuthor>
                        <Fit width={63}>You</Fit>
                    </QuoteAuthor>
                    <Fit width={650}>How much u payed for ur withdrawal</Fit>
                </QuoteBody>
            </Quote>
            <Copy $top={166}>
                <Fit width={793}>My total tax payments exceed $100,000</Fit>
            </Copy>
            <Time value="5:11 pm" width={108} />
        </Bubble>
        <Bubble $w={805} $h={154} $gap={7}>
            <Copy>
                <Fit width={748}>But I'm still trading in the market now</Fit>
            </Copy>
            <Time value="5:12 pm" width={112} />
        </Bubble>
        <Bubble $mine $tail $w={640} $h={100} $gap={28}>
            <Copy>
                <Fit width={395}>But i have no money</Fit>
            </Copy>
            <Time value="5:12 pm" width={112} read />
        </Bubble>
        <PhotoRow>
            <Bubble $tail $w={703} $h={950} $gap={0}>
                <TradePhoto />
            </Bubble>
            <Forward>
                <svg width="56" height="42" viewBox="0 0 56 42" fill="#fff" stroke="#fff" strokeWidth="2" strokeLinejoin="round">
                    <path d="M1 40C4 22 14 11 34 10V1L54 19 34 37V28C18 27 8 30 1 40Z" />
                </svg>
            </Forward>
        </PhotoRow>
    </Messages>
);

const MessageBox = () => (
    <Composer>
        <Field>
            <svg width="58" height="60" viewBox="0 0 58 60" fill="none" stroke="#8696a0" strokeWidth="4.500">
                <circle cx="29" cy="30" r="26.500" />
                <ellipse cx="21.500" cy="23" rx="3.800" ry="5" fill="#8696a0" stroke="none" />
                <ellipse cx="36.500" cy="23" rx="3.800" ry="5" fill="#8696a0" stroke="none" />
                <path d="M16 35Q29 39 42 35Q40 47 29 47T16 35Z" strokeWidth="4" />
                <path d="M18 40Q29 44 40 40Q36 47 29 47T18 40Z" fill="#8696a0" stroke="none" />
            </svg>
            <Placeholder>
                <Fit width={187}>Message</Fit>
            </Placeholder>
            <FieldIcons>
                <svg width="60" height="54" viewBox="0 0 60 54" fill="none" stroke="#8696a0" strokeWidth="4" strokeLinecap="round">
                    <path d="M29 5L54 31C60 38 58 45 54 49C49 53 42 52 37 48L6 17C1 12 2 7 5 4C9 1 14 2 18 6L43 31C47 35 45 38 43 39C41 41 38 41 35 38L16 19" />
                </svg>
                <svg width="54" height="52" viewBox="0 0 54 52">
                    <path d="M8 8H15L19 2Q20 0 23 0H31Q34 0 35 2L39 8H46Q54 8 54 16V44Q54 52 46 52H8Q0 52 0 44V16Q0 8 8 8Z" fill="#8696a0" />
                    <circle cx="27" cy="27.500" r="11" fill="none" stroke="#fff" strokeWidth="5" />
                </svg>
            </FieldIcons>
        </Field>
        <Mic>
            <svg width="42" height="58" viewBox="0 0 42 58" fill="none" stroke="#fff" strokeLinecap="round">
                <path d="M21 9V26" strokeWidth="16" />
                <path d="M3 28Q4 42 21 43T39 28M21 43V55" strokeWidth="4.500" />
            </svg>
        </Mic>
    </Composer>
);

const App = () => (
    <Phone>
        <GlobalStyle />
        <TopBar />
        <Body>
            <Doodles />
            <Chat />
            <MessageBox />
            <ScrollDown>
                <svg width="36" height="34" viewBox="0 0 36 34" fill="none" stroke="#5f6f78" strokeWidth="4">
                    <path d="M3 3L18 16 33 3M3 17L18 30 33 17" />
                </svg>
            </ScrollDown>
        </Body>
        <NavBar>
            <svg width="33" height="33">
                <rect width="33" height="33" rx="2" fill="#9e9e9e" />
            </svg>
            <svg width="50" height="50" viewBox="0 0 50 50">
                <circle cx="25" cy="25" r="23" fill="none" stroke="#9e9e9e" strokeWidth="3" />
                <circle cx="25" cy="25" r="17" fill="#9e9e9e" />
            </svg>
            <svg width="33" height="38" viewBox="0 0 33 38" fill="#9e9e9e">
                <path d="M1 18Q0 19 1 20L31 37Q33 38 33 35V3Q33 0 31 1Z" />
            </svg>
        </NavBar>
        <Watermark width="1080" height="900">
            <path d="M136 489C75 470 75 350 167 258C215 190 270 140 330 107C420 70 500 55 560 55C470 90 380 150 323 212C410 100 600 90 700 150C760 180 785 195 794 206L797 420Q792 490 777 530C730 480 700 450 609 414L540 384L647 427L760 507L730 600L735 616L600 725L427 868L388 851Q470 760 492 725Q516 660 516 540L496 540Q480 440 383 413Q290 360 193 413Q140 440 136 489ZM266 283Q200 300 170 340Q150 290 200 262L323 259ZM579 259Q700 290 760 338V259Z" fillRule="evenodd" />
            <path d="M485 540L481 641Q470 680 440 706L331 811 167 683 112 628 210 620 340 595 440 548Z" />
        </Watermark>
    </Phone>
);

export default App;
